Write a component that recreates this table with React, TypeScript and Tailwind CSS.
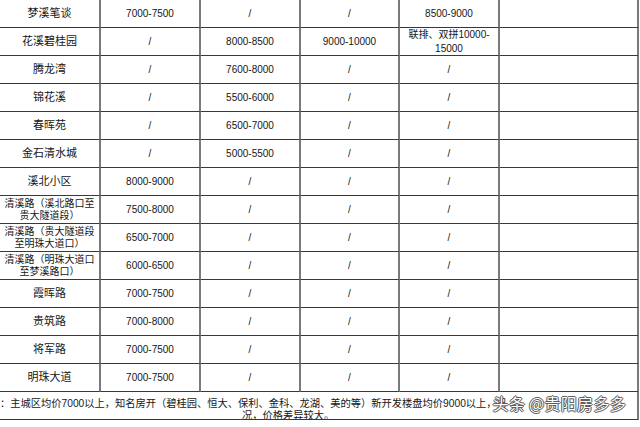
import React from "react";

type Row = {
  name: string[];
  cols: string[][];
  small?: boolean;
};

const rows: Row[] = [
  { name: ["梦溪笔谈"], cols: [["7000-7500"], ["/"], ["/"], ["8500-9000"], [""]] },
  {
    name: ["花溪碧桂园"],
    cols: [["/"], ["8000-8500"], ["9000-10000"], ["联排、双拼10000-", "15000"], [""]],
  },
  { name: ["腾龙湾"], cols: [["/"], ["7600-8000"], ["/"], ["/"], [""]] },
  { name: ["锦花溪"], cols: [["/"], ["5500-6000"], ["/"], ["/"], [""]] },
  { name: ["春晖苑"], cols: [["/"], ["6500-7000"], ["/"], ["/"], [""]] },
  { name: ["金石清水城"], cols: [["/"], ["5000-5500"], ["/"], ["/"], [""]] },
  { name: ["溪北小区"], cols: [["8000-9000"], ["/"], ["/"], ["/"], [""]] },
  {
    name: ["清溪路（溪北路口至", "贵大隧道段）"],
    small: true,
    cols: [["7500-8000"], ["/"], ["/"], ["/"], [""]],
  },
  {
    name: ["清溪路（贵大隧道段", "至明珠大道口）"],
    small: true,
    cols: [["6500-7000"], ["/"], ["/"], ["/"], [""]],
  },
  {
    name: ["清溪路（明珠大道口", "至梦溪路口）"],
    small: true,
    cols: [["6000-6500"], ["/"], ["/"], ["/"], [""]],
  },
  { name: ["霞晖路"], cols: [["7000-7500"], ["/"], ["/"], ["/"], [""]] },
  { name: ["贵筑路"], cols: [["7000-8000"], ["/"], ["/"], ["/"], [""]] },
  { name: ["将军路"], cols: [["7000-7500"], ["/"], ["/"], ["/"], [""]] },
  { name: ["明珠大道"], cols: [["7000-7500"], ["/"], ["/"], ["/"], [""]] },
];

const cellBase =
  "h-[28px] flex flex-col items-center justify-center text-center border-r-2 border-r-[#7a7a7a] border-b border-b-[#383838]";

const Lines = ({ lines }: { lines: string[] }) => (
  <>
    {lines.map((l, i) => (
      <span key={i} className="whitespace-nowrap">
        {l}
      </span>
    ))}
  </>
);

export default function App() {
  return (
    <div
      className="w-[640px] h-[427px] bg-white overflow-hidden text-[#161616]"
      style={{ fontFamily: '"Liberation Sans", "Noto Sans CJK SC", sans-serif' }}
    >
      <div className="grid w-[639px] grid-cols-[101px_100px_100px_99px_100px_139px]">
        {rows.map((row) => (
          <React.Fragment key={row.name.join("")}>
            <div
              className={`${cellBase} ${
                row.small ? "text-[10px] leading-[12px]" : "text-[11px] leading-[13px]"
              }`}
            >
              <Lines lines={row.name} />
            </div>
            {row.cols.map((c, i) => (
              <div key={i} className={`${cellBase} text-[10px] leading-[14px]`}>
                <Lines lines={c} />
              </div>
            ))}
          </React.Fragment>
        ))}
      </div>

      {/* 备注行 */}
      <div className="relative w-[639px] h-[28px] border-r-2 border-r-[#7a7a7a] border-b border-b-[#383838] text-[10.25px] leading-[12px] pt-[6px] overflow-hidden">
        <div className="whitespace-nowrap">
          ：主城区均价7000以上，知名房开（碧桂园、恒大、保利、金科、龙湖、美的等）新开发楼盘均价9000以上，另
        </div>
        <div className="whitespace-nowrap pl-[242px]">况，价格差异较大。</div>

        <div
          className="absolute right-[11px] top-[1px] text-[16px] leading-[20px] text-white whitespace-nowrap tracking-[0.3px] [text-shadow:0_0_1px_#333,1px_0_0_#666,-1px_0_0_#666,0_1px_0_#666,0_-1px_0_#666]"
          style={{ fontFamily: '"Noto Sans CJK SC", sans-serif' }}
        >
          头条 @贵阳房多多
        </div>
      </div>
    </div>
  );
}
